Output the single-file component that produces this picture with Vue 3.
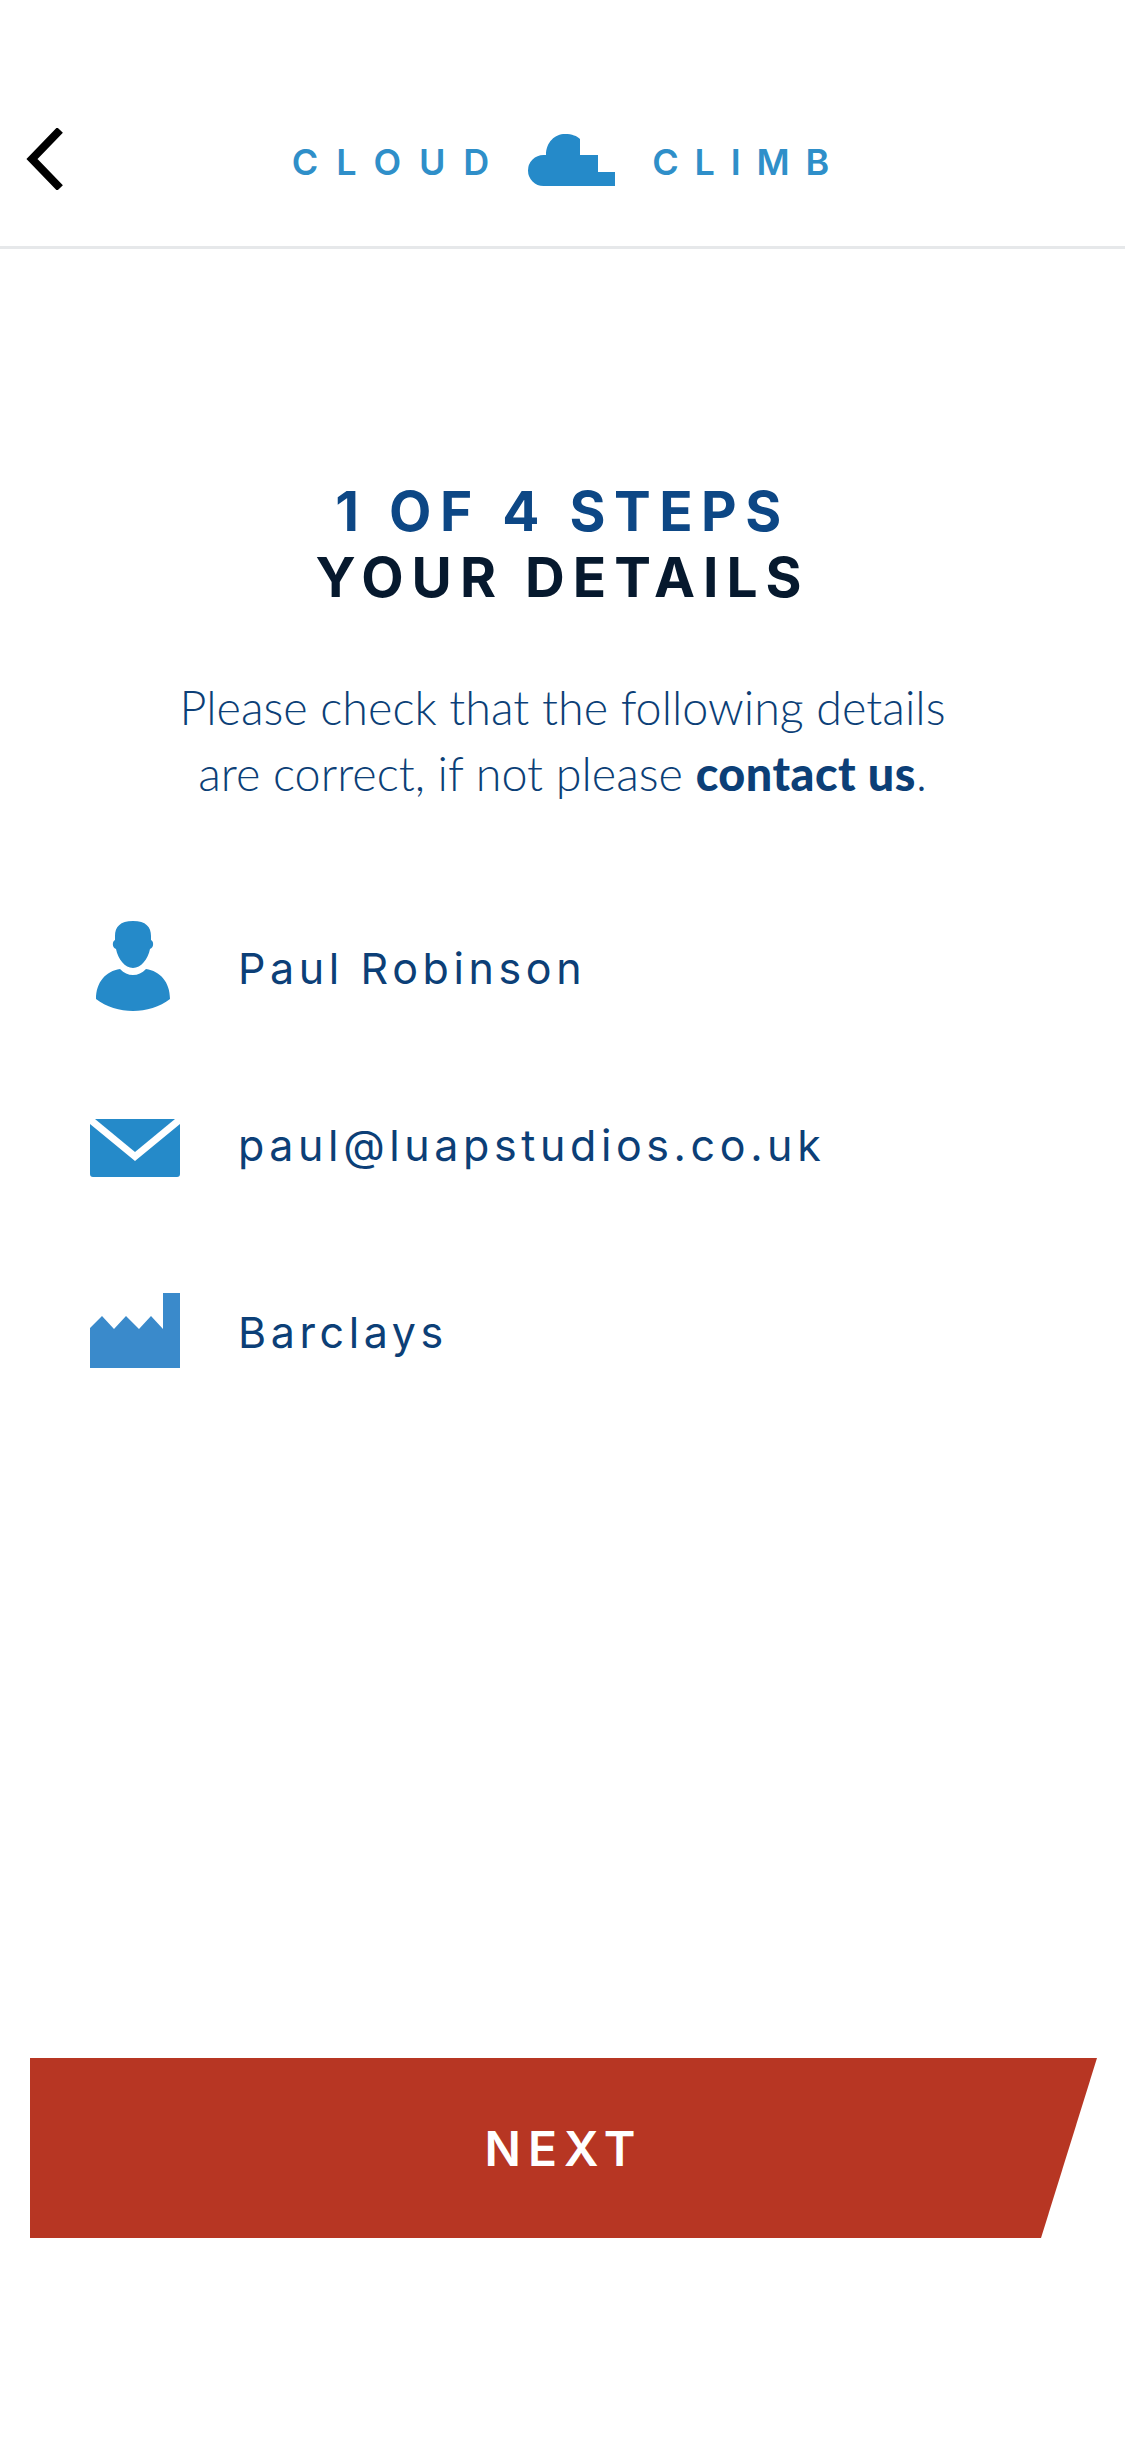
<script setup>
const details = [
  { id: 'person', text: 'Paul Robinson' },
  { id: 'mail', text: 'paul@luapstudios.co.uk' },
  { id: 'factory', text: 'Barclays' },
]
</script>

<template>
  <div class="page">
    <header class="header">
      <button class="back" aria-label="Back">
        <svg width="37" height="62" viewBox="0 0 37 62">
          <path d="M34 2 L6 31 L34 60" fill="none" stroke="#000" stroke-width="8" />
        </svg>
      </button>
      <div class="logo">
        <span class="logo-word cloud">CLOUD</span>
        <svg width="87" height="52" viewBox="0 0 87 52">
          <path fill="#258ac9" d="M15.5 52 A15.5 15.5 0 0 1 15.5 21 L18 21 C18 8 27 0 37 0 C44 0 49 2 52 5 L52 21 L70 21 L70 38 L87 38 L87 52 Z" />
        </svg>
        <span class="logo-word climb">CLIMB</span>
      </div>
      <span></span>
    </header>

    <main class="main">
      <h1 class="title">
        <span class="step">1 OF 4 STEPS</span>
        <span class="name">YOUR DETAILS</span>
      </h1>
      <p class="intro">
        Please check that the following details<br />
        are correct, if not please <strong>contact us</strong>.
      </p>

      <ul class="details">
        <li v-for="d in details" :key="d.id" class="row" :class="`row-${d.id}`">
          <span class="icon">
            <svg v-if="d.id === 'person'" width="78" height="90" viewBox="0 0 78 90">
              <path fill="#258ac9" d="M37 0 C50 0 55 6 55 15 L55 19 C58 20 58 27 54 28 C52 38 45 47 37 47 C29 47 22 38 20 28 C16 27 16 20 19 19 L19 15 C19 6 24 0 37 0 Z" />
              <path fill="#258ac9" d="M24 48 C28 52 32 54 37 54 C42 54 46 52 50 48 C64 50 74 61 74 78 C64 86 50 90 37 90 C24 90 10 86 0 78 C0 61 10 50 24 48 Z" />
            </svg>
            <svg v-else-if="d.id === 'mail'" width="90" height="58" viewBox="0 0 90 58">
              <path fill="#258ac9" d="M0 5 L45 42 L90 5 L90 55 Q90 58 87 58 L3 58 Q0 58 0 55 Z" />
              <path fill="#258ac9" d="M5 0 L85 0 L45 33 Z" />
            </svg>
            <svg v-else width="90" height="75" viewBox="0 0 90 75">
              <path fill="#3a8acb" d="M73 0 L90 0 L90 75 L0 75 L0 35 L12 23 L24 36 L36 23 L49 36 L61 23 L73 36 Z" />
            </svg>
          </span>
          <span class="row-text">{{ d.text }}</span>
        </li>
      </ul>

      <button class="next">NEXT</button>
    </main>
  </div>
</template>

<style scoped>
.page {
  width: 1125px;
  min-height: 2448px;
  background: #fff;
  font-family: "Inter", "Liberation Sans", sans-serif;
}
.header {
  display: grid;
  grid-template-columns: 1fr auto 1fr;
  align-items: center;
  padding: 128px 0 56px;
  border-bottom: 3px solid #e6e8ea;
}
.back {
  display: flex;
  padding: 0 0 0 26px;
  border: 0;
  background: none;
}
.logo {
  display: flex;
  align-items: center;
  margin-top: 2px;
}
.logo-word {
  font-size: 36px;
  font-weight: 600;
  line-height: 40px;
  margin-top: 4px;
  color: #2f8fc9;
}
.cloud {
  letter-spacing: 17.9px;
  margin-right: 21px;
}
.climb {
  letter-spacing: 15.8px;
  margin-left: 37px;
  margin-right: -11.8px;
}
.main {
  display: flex;
  flex-direction: column;
  padding-top: 229px;
}
.title {
  margin: 0;
  display: flex;
  flex-direction: column;
  align-items: center;
  font-size: 55px;
  font-weight: 700;
  line-height: 66px;
  letter-spacing: 8px;
}
.step {
  color: #0d4785;
  letter-spacing: 8.5px;
}
.name { color: #06192e; }
.intro {
  margin: 64px 0 0;
  text-align: center;
  font-family: "Lato", "Liberation Sans", sans-serif;
  font-size: 46.7px;
  font-weight: 300;
  line-height: 66px;
  color: #0c3f77;
}
.intro strong {
  font-weight: 900;
  letter-spacing: 0.5px;
  color: #0c3f77;
}
.details {
  margin: 69px 0 0;
  padding: 0 0 0 90px;
  list-style: none;
}
.row {
  height: 182px;
  display: flex;
  align-items: center;
  gap: 58px;
}
.icon {
  width: 90px;
  display: flex;
  justify-content: center;
}
.row-text {
  font-size: 43px;
  letter-spacing: 4.6px;
  color: #0c3f77;
}
.row-person .row-text,
.row-factory .row-text {
  margin-top: 3px;
}
.row-mail .row-text {
  margin-top: -7px;
}
.next {
  margin: 637px 0 0 30px;
  width: 1067px;
  height: 180px;
  border: 0;
  background: #b73623;
  clip-path: polygon(0 0, 100% 0, 1011px 100%, 0 100%);
  color: #fff;
  font-family: inherit;
  font-size: 48px;
  font-weight: 600;
  letter-spacing: 7px;
}
</style>
